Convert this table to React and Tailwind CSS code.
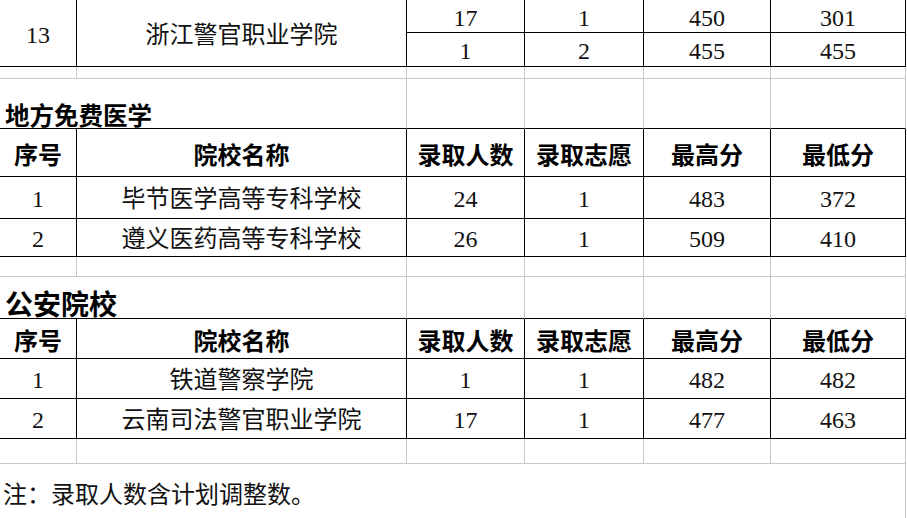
import React from 'react';

// column widths, each includes its own right border
const W = ['w-[77px]', 'w-[330px]', 'w-[118px]', 'w-[119px]', 'w-[127px]', 'w-[135px]'];
const LINE = { black: 'border-black', gray: 'border-[#c8c8c8]' };

const body = "font-['Liberation_Serif','Noto_Sans_CJK_SC',serif] text-[24px] text-[#111]";
const head = "font-['Noto_Sans_CJK_SC',sans-serif] text-[24px] font-bold text-black";

const headers = ['序号', '院校名称', '录取人数', '录取志愿', '最高分', '最低分'];

function Row({ h, v = 'black', b = 'black', cells = ['', '', '', '', '', ''], bold, from = 0 }) {
  return (
    <div className={`flex shrink-0 ${h}`}>
      {cells.map((c, i) => (
        <div
          key={i}
          className={`${W[from + i]} shrink-0 h-full border-r border-b ${LINE[v]} ${b === 'black' ? 'border-b-black' : 'border-b-[#c8c8c8]'} flex items-center justify-center leading-none pt-[3px] ${bold ? head : body}`}
        >
          {c}
        </div>
      ))}
    </div>
  );
}

function TitleRow({ h, title, size }) {
  return (
    <div className={`flex shrink-0 ${h}`}>
      <div className={`w-[407px] shrink-0 h-full border-r border-b border-[#c8c8c8] border-b-black flex items-end pl-[5px] pb-[1px] leading-none whitespace-nowrap font-['Noto_Sans_CJK_SC',sans-serif] font-bold text-black ${size}`}>
        {title}
      </div>
      {[2, 3, 4, 5].map((i) => (
        <div key={i} className={`${W[i]} shrink-0 h-full border-r border-b border-[#c8c8c8] border-b-black`} />
      ))}
    </div>
  );
}

export default function App() {
  return (
    <div className="w-[907px] h-[518px] overflow-hidden bg-white flex flex-col">
      {/* tail of previous table: row 13 spans two lines */}
      <div className="flex shrink-0 h-[67px]">
        <div className={`${W[0]} shrink-0 h-full border-r border-b border-black flex items-center justify-center pt-[3px] leading-none ${body}`}>13</div>
        <div className={`${W[1]} shrink-0 h-full border-r border-b border-black flex items-center justify-center pt-[3px] leading-none ${body}`}>浙江警官职业学院</div>
        <div className="flex flex-col">
          <Row h="h-[33px]" from={2} cells={['17', '1', '450', '301']} />
          <Row h="h-[34px]" from={2} cells={['1', '2', '455', '455']} />
        </div>
      </div>
      <Row h="h-[12px]" v="gray" b="gray" />
      <TitleRow h="h-[50px]" title="地方免费医学" size="text-[24.5px]" />
      <Row h="h-[48px]" cells={headers} bold />
      <Row h="h-[42px]" cells={['1', '毕节医学高等专科学校', '24', '1', '483', '372']} />
      <Row h="h-[38px]" cells={['2', '遵义医药高等专科学校', '26', '1', '509', '410']} />
      <Row h="h-[20px]" v="gray" b="gray" />
      <TitleRow h="h-[42px]" title="公安院校" size="text-[28px]" />
      <Row h="h-[40px]" cells={headers} bold />
      <Row h="h-[40px]" cells={['1', '铁道警察学院', '1', '1', '482', '482']} />
      <Row h="h-[40px]" cells={['2', '云南司法警官职业学院', '17', '1', '477', '463']} />
      <Row h="h-[25px]" v="gray" b="gray" />
      <div className="flex flex-1">
        <div className={`w-[906px] h-full border-r border-[#c8c8c8] pl-[3px] pt-[19px] leading-none whitespace-nowrap ${body}`}>
          注：录取人数含计划调整数。
        </div>
      </div>
    </div>
  );
}
